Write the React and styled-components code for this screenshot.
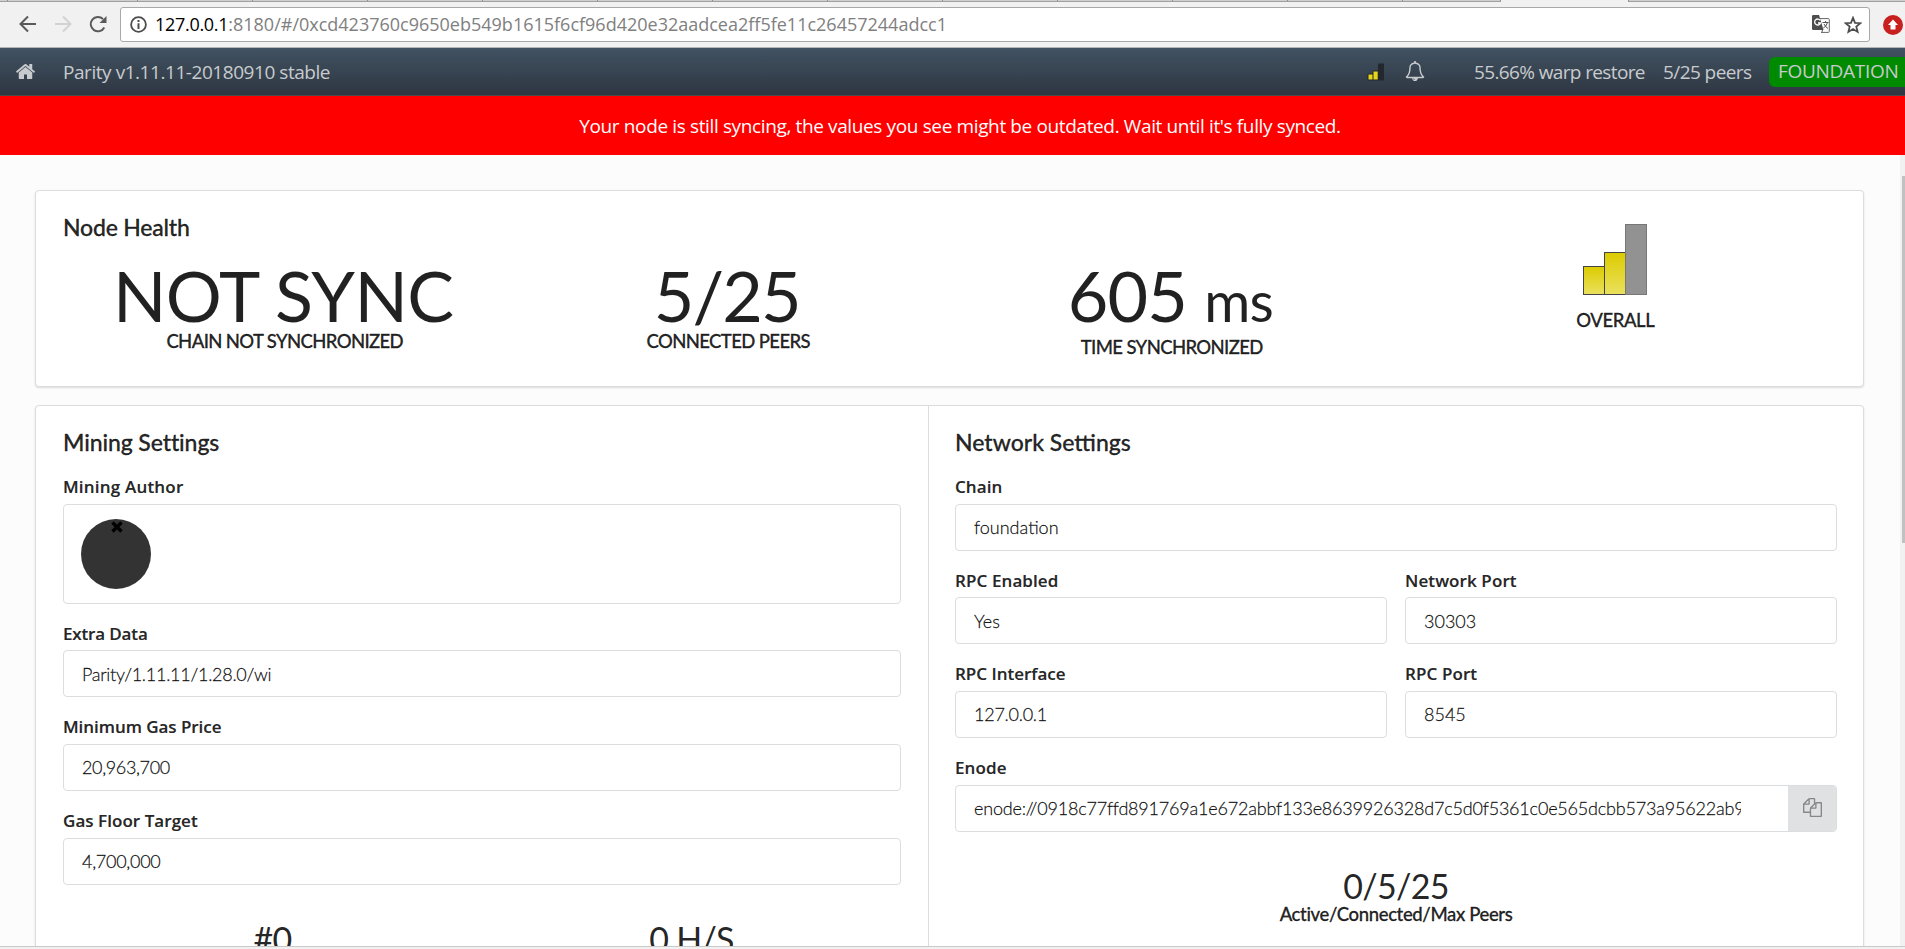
import React from 'react';
import styled, { createGlobalStyle } from 'styled-components';

const GlobalStyle = createGlobalStyle`
  * { box-sizing: border-box; }
  html, body { margin: 0; height: 949px; overflow: hidden; background: #fcfcfc; }
  body { font-family: Lato, "Liberation Sans", sans-serif; color: rgba(0, 0, 0, 0.87); }
`;

const ui = '"Open Sans", "Noto Sans", sans-serif';

const Window = styled.div`
  width: 1905px;
  height: 949px;
  display: flex;
  flex-direction: column;
  overflow: hidden;
`;

const TabStrip = styled.div`
  height: 2px;
  flex: none;
  display: flex;
  background: #cfcfcf;
  border-bottom: 1px solid #a0a0a0;
`;
const Tab = styled.div`
  width: ${(p) => p.$w}px;
  flex: none;
  height: ${(p) => (p.$active ? 2 : 1)}px;
  background: ${(p) => (p.$active ? '#f1f1f1' : '#cfcfcf')};
  border-right: 1px solid #8f8f8f;
`;

const Toolbar = styled.div`
  height: 46px;
  flex: none;
  display: flex;
  align-items: flex-start;
  background: #f1f1f1;
  border-bottom: 1px solid #b4b6b5;
  padding: 5px 0 0 18px;
`;
const NavIcon = styled.svg`
  width: 20px;
  height: 20px;
  margin: 7px 15px 0 0;
  flex: none;
  fill: none;
  stroke: ${(p) => (p.$dim ? '#d2d2d2' : '#5a5a5a')};
  stroke-width: 2;
`;
const AddressBar = styled.div`
  width: 1750px;
  height: 35px;
  margin-left: -3px;
  display: flex;
  align-items: center;
  background: #fff;
  border: 1px solid #a8a8a8;
  border-radius: 3px;
  padding: 0 7px 0 9px;
  svg { flex: none; }
`;
const Url = styled.div`
  flex: 1;
  margin-left: 8px;
  font: 18px/32px ${ui};
  height: 33px;
  letter-spacing: 0;
  color: #808080;
  white-space: nowrap;
  b { font-weight: 400; color: #000; letter-spacing: -0.3px; }
`;
const StarIcon = styled.svg`
  margin-left: 14px;
`;
const UpdateIcon = styled.svg`
  margin: 8px 0 0 13px;
  flex: none;
`;

const Header = styled.header`
  height: 48px;
  flex: none;
  display: flex;
  align-items: center;
  padding-left: 15px;
  background: linear-gradient(#415262, #2e3641);
  border-bottom: 1px solid #4a4a4a;
  color: #c8cbce;
  font: 19px/46px ${ui};
  white-space: nowrap;
  svg { flex: none; }
`;
const BellIcon = styled.svg`
  margin: 0 49px 2px 20px;
`;
const HeaderText = styled.span`
  margin-left: ${(p) => p.$gap}px;
  width: ${(p) => p.$w}px;
  flex: none;
  letter-spacing: ${(p) => p.$ls || 0}px;
`;
const Spacer = styled.div`flex: 1;`;
const ChainBadge = styled.span`
  width: 142px;
  height: 30px;
  margin: 0 -6px 0 18px;
  flex: none;
  padding-left: 9px;
  background: #008a00;
  border-radius: 6px;
  line-height: 28px;
  letter-spacing: -0.3px;
`;

const Banner = styled.div`
  height: 59px;
  flex: none;
  padding-left: 15px;
  background: #f00;
  color: #fff;
  text-align: center;
  font: 19px/60px ${ui};
  letter-spacing: -0.37px;
`;

const Viewport = styled.div`
  flex: 1;
  min-height: 0;
  display: flex;
  overflow: hidden;
  border-bottom: 1px solid #c9c9c9;
`;
const Page = styled.main`
  flex: 1;
  padding: 35px 36px 0 35px;
`;
const Scrollbar = styled.div`
  width: 6px;
  flex: none;
  background: #f1f1f1;
  padding: 21px 0 0 2px;
`;
const Thumb = styled.div`
  height: 367px;
  background: #c1c1c1;
`;
const StatusEdge = styled.div`
  height: 2px;
  flex: none;
  background: #f1f1f1;
`;

const Card = styled.section`
  border: 1px solid #dcddde;
  border-radius: 4px;
  background: #fff;
  box-shadow: 0 1px 2px rgba(34, 36, 38, 0.15);
`;
const HealthCard = styled(Card)`
  height: 197px;
  padding: 22px 26px 0 27px;
  margin-bottom: 18px;
`;
const SettingsCard = styled(Card)`
  height: 900px;
  display: flex;
`;
const Column = styled.div`
  width: ${(p) => p.$w}px;
  flex: none;
  padding: 22px ${(p) => p.$right}px 0 ${(p) => p.$left}px;
  border-right: ${(p) => (p.$divider ? '1px solid #dcddde' : 'none')};
`;
const Title = styled.h2`
  margin: 0;
  font-size: 23px;
  line-height: 28px;
  font-weight: 500;
  letter-spacing: ${(p) => p.$ls ?? -0.1}px;
  -webkit-text-stroke: 0.3px;
  white-space: nowrap;
`;

const Metrics = styled.div`
  display: grid;
  grid-template-columns: repeat(4, 1fr);
`;
const Metric = styled.div`
  display: flex;
  flex-direction: column;
  align-items: center;
  text-align: center;
  white-space: nowrap;
`;
const BigValue = styled.div`
  margin: 19px 3px 0 0;
  height: ${(p) => p.$h || 69}px;
  font-size: 70px;
  line-height: 71px;
  letter-spacing: ${(p) => p.$ls}px;
  small { font-size: 56px; }
`;
const Caption = styled.div`
  font-size: 18.500px;
  line-height: 24px;
  font-weight: 500;
  -webkit-text-stroke: 0.3px;
  letter-spacing: ${(p) => p.$ls || 0}px;
`;
const OverallBars = styled.svg`
  margin: -17px 0 12px;
`;

const Field = styled.div`
  margin-top: ${(p) => (p.$first ? 18.1 : 17.2)}px;
  flex: 1;
`;
const FieldRow = styled.div`
  display: flex;
  gap: 18px;
`;
const Label = styled.div`
  height: 29.5px;
  font: 600 17px/25px ${ui};
  letter-spacing: ${(p) => p.$ls ?? 0.1}px;
  -webkit-text-stroke: 0.2px;
  white-space: nowrap;
`;
const Box = styled.div`
  height: ${(p) => p.$h || 47}px;
  display: flex;
  align-items: center;
  border: 1px solid #dcddde;
  border-radius: 4px;
  padding: 0 0 0.5px 18px;
  font-size: 18px;
  font-weight: 300;
  line-height: 24px;
  overflow: hidden;
`;
const BoxText = styled.span`
  width: ${(p) => (p.$w ? p.$w + 'px' : 'auto')};
  overflow: hidden;
  white-space: nowrap;
  letter-spacing: ${(p) => p.$ls || 0}px;
  -webkit-text-stroke: 0.3px;
`;
const CopyButton = styled.div`
  width: 49px;
  height: 48px;
  margin: -1px -1px -1px auto;
  display: flex;
  align-items: center;
  justify-content: center;
  background: #e0e1e2;
`;
const Avatar = styled.div`
  width: 70px;
  height: 70px;
  margin: 2px 0 0 -1px;
  border-radius: 50%;
  background: #333;
  display: flex;
  justify-content: center;
  padding: 2px 0 0 1px;
`;

const Stats = styled.div`
  display: flex;
  margin-top: ${(p) => p.$top}px;
`;
const Stat = styled.div`
  flex: 1;
  text-align: center;
  white-space: nowrap;
`;
const StatValue = styled.div`
  font-size: 34px;
  line-height: 34px;
  height: 33px;
  letter-spacing: -0.7px;
`;

const TextField = ({ label, value, first, ls, labelLs }) => (
  <Field $first={first}>
    <Label $ls={labelLs}>{label}</Label>
    <Box><BoxText $ls={ls}>{value}</BoxText></Box>
  </Field>
);

const tabs = [8, 130, 115, 115, 115, 115, 115, 115, 115, 115, 115, 115, 115, 98];

export default function App() {
  return (
    <Window>
      <GlobalStyle />
      <TabStrip>
        {tabs.map((w, i) => <Tab key={i} $w={w} />)}
        <Tab $w={128} $active />
      </TabStrip>
      <Toolbar>
        <NavIcon viewBox="0 0 20 20"><path d="M18 10H3M10 2.5L2.5 10l7.5 7.5" /></NavIcon>
        <NavIcon viewBox="0 0 20 20" $dim><path d="M2 10h15M10 2.5l7.500 7.5-7.5 7.500" /></NavIcon>
        <NavIcon viewBox="0 0 20 20">
          <path d="M16.300 13.500A7.200 7.200 0 1 1 15 5" />
          <path d="M18.500 2v7h-7z" fill="#5a5a5a" stroke="none" />
        </NavIcon>
        <AddressBar>
          <svg width="17" height="17" viewBox="0 0 17 17">
            <circle cx="8.500" cy="8.500" r="7.400" fill="none" stroke="#4d4d4d" strokeWidth="1.800" />
            <path d="M7.500 4h2v2h-2zM7.500 7.300h2V13h-2z" fill="#4d4d4d" />
          </svg>
          <Url><b>127.0.0.1</b>:8180/#/0xcd423760c9650eb549b1615f6cf96d420e32aadcea2ff5fe11c26457244adcc1</Url>
          <svg width="18" height="19" viewBox="0 0 18 19">
            <path d="M8 3.600h8.300q1 0 1 1v11.800q0 1-1 1H10" fill="none" stroke="#666" />
            <path d="M1.200 0H7l4.500 15H1.200Q0 15 0 13.800V1.200Q0 0 1.200 0z" fill="#4d4d4d" />
            <path d="M8.200 5.400A3 3 0 1 0 8.500 8H6" fill="none" stroke="#fff" strokeWidth="1.300" />
            <path d="M10.500 7.500h6M13.500 6v1.500M15.300 8q-1 3.500-4 5M12 9q1.500 3 4 4.500M10.500 15l-1 3" fill="none" stroke="#555" />
          </svg>
          <StarIcon width="18" height="18" viewBox="0 0 18 18">
            <path d="M9 1.800l2 5 5.400.4-4.100 3.400 1.300 5.300L9 13l-4.600 2.900 1.300-5.300-4.100-3.400 5.400-.4z" fill="none" stroke="#4d4d4d" strokeWidth="1.800" />
          </StarIcon>
        </AddressBar>
        <UpdateIcon width="20" height="20" viewBox="0 0 20 20">
          <circle cx="10" cy="10" r="10" fill="#c8201e" />
          <path d="M10 4.500l5 5.500h-2.500v4.500h-5V10H5z" fill="#fff" />
        </UpdateIcon>
      </Toolbar>

      <Header>
        <svg width="21" height="21" viewBox="0 0 1792 1792" fill="#c8cbce">
          <path d="M1472 992v480q0 26-19 45t-45 19h-384v-384h-256v384h-384q-26 0-45-19t-19-45v-480q0-1 .5-3t.5-3l575-474 575 474q1 2 1 6zm223-69l-62 74q-8 9-21 11h-3q-13 0-21-7l-692-577-692 577q-12 8-24 7-13-2-21-11l-62-74q-8-10-7-23.500t11-21.500l719-599q32-26 76-26t76 26l244 204v-195q0-14 9-23t23-9h192q14 0 23 9t9 23v408l219 182q10 8 11 21.500t-7 23.500z" />
        </svg>
        <HeaderText $gap={27} $ls={-0.45}>Parity v1.11.11-20180910 stable</HeaderText>
        <Spacer />
        <svg width="18" height="18" viewBox="0 0 18 18">
          <path d="M0.500 10.500h5v-3h5.500v-7h6v17H0.500z" fill="#23282e" />
          <path d="M1.500 11.500h4v5h-4zM6.500 8.500h4.200v8H6.500z" fill="#e6d51a" />
        </svg>
        <BellIcon width="20" height="20" viewBox="0 0 1792 1792" fill="#c8cbce">
          <path d="M912 1696q0-16-16-16-59 0-101.500-42.500t-42.500-101.500q0-16-16-16t-16 16q0 73 51.500 124.500t124.500 51.500q16 0 16-16zm-666-288h1300q-266-300-266-832 0-51-24-105t-69-103-121.500-80.500-169.500-31.500-169.500 31.500-121.500 80.500-69 103-24 105q0 532-266 832zm1482 0q0 52-38 90t-90 38h-448q0 106-75 181t-181 75-181-75-75-181h-448q-52 0-90-38t-38-90q50-42 91-88t85-119.500 74.500-158.500 50-206 19.500-260q0-152 117-282.500t307-158.500q-8-19-8-39 0-40 28-68t68-28 68 28 28 68q0 20-8 39 190 28 307 158.500t117 282.500q0 139 19.500 260t50 206 74.500 158.500 85 119.500 91 88z" />
        </BellIcon>
        <HeaderText $gap={0} $w={171} $ls={-0.63}>55.66% warp restore</HeaderText>
        <HeaderText $gap={18} $w={88} $ls={-0.58}>5/25 peers</HeaderText>
        <ChainBadge>FOUNDATION</ChainBadge>
      </Header>

      <Banner>Your node is still syncing, the values you see might be outdated. Wait until it's fully synced.</Banner>

      <Viewport>
        <Page>
          <HealthCard>
            <Title $ls={-0.2}>Node Health</Title>
            <Metrics>
              <Metric><BigValue $ls={-0.6}>NOT SYNC</BigValue><Caption $ls={-0.63}>CHAIN NOT SYNCHRONIZED</Caption></Metric>
              <Metric><BigValue $ls={-1.8}>5/25</BigValue><Caption $ls={-0.6}>CONNECTED PEERS</Caption></Metric>
              <Metric><BigValue $h={75} $ls={-0.8}>605 <small>ms</small></BigValue><Caption $ls={-0.62}>TIME SYNCHRONIZED</Caption></Metric>
              <Metric>
                <OverallBars width="66" height="72" viewBox="0 0 66 72">
                  <defs>
                    <linearGradient id="gold" x1="0" y1="0" x2="0" y2="1">
                      <stop offset="0" stopColor="#dccb00" />
                      <stop offset="1" stopColor="#eae15e" />
                    </linearGradient>
                  </defs>
                  <rect x="1.500" y="42.500" width="21" height="28" fill="url(#gold)" stroke="#444" />
                  <rect x="22.500" y="28.500" width="21" height="42" fill="url(#gold)" stroke="#444" />
                  <rect x="43.500" y="0.500" width="21" height="70" fill="#929292" stroke="#777" />
                </OverallBars>
                <Caption $ls={-0.43}>OVERALL</Caption>
              </Metric>
            </Metrics>
          </HealthCard>

          <SettingsCard>
            <Column $w={893} $left={27} $right={27} $divider>
              <Title>Mining Settings</Title>
              <Field $first>
                <Label $ls={0.2}>Mining Author</Label>
                <Box $h={100}>
                  <Avatar>
                    <svg width="12" height="12" viewBox="0 0 12 12">
                      <path d="M1.500 1.500l9 9M10.500 1.500l-9 9" stroke="#000" strokeWidth="3.400" />
                    </svg>
                  </Avatar>
                </Box>
              </Field>
              <TextField label="Extra Data" labelLs={-0.15} value="Parity/1.11.11/1.28.0/wi" ls={-0.27} />
              <TextField label="Minimum Gas Price" labelLs={-0.05} value="20,963,700" ls={-0.36} />
              <TextField label="Gas Floor Target" labelLs={0.05} value="4,700,000" ls={-0.27} />
              <Stats $top={37}>
                <Stat><StatValue>#0</StatValue></Stat>
                <Stat><StatValue>0 H/S</StatValue></Stat>
              </Stats>
            </Column>
            <Column $w={934} $left={26} $right={26}>
              <Title $ls={0}>Network Settings</Title>
              <TextField first label="Chain" value="foundation" />
              <FieldRow>
                <TextField label="RPC Enabled" labelLs={0.1} value="Yes" />
                <TextField label="Network Port" value="30303" />
              </FieldRow>
              <FieldRow>
                <TextField label="RPC Interface" labelLs={0} value="127.0.0.1" ls={-0.25} />
                <TextField label="RPC Port" value="8545" />
              </FieldRow>
              <Field>
                <Label>Enode</Label>
                <Box>
                  <BoxText $w={767} $ls={-0.2}>enode://0918c77ffd891769a1e672abbf133e8639926328d7c5d0f5361c0e565dcbb573a95622ab9</BoxText>
                  <CopyButton>
                    <svg width="19" height="19" viewBox="0 0 1792 1792" fill="#85878a">
                      <path d="M1696 384q40 0 68 28t28 68v1216q0 40-28 68t-68 28h-960q-40 0-68-28t-28-68v-288h-544q-40 0-68-28t-28-68v-672q0-40 20-88t48-76l408-408q28-28 76-48t88-20h416q40 0 68 28t28 68v328q68-40 128-40h416zm-544 213l-299 299h299v-299zm-640-384l-299 299h299v-299zm196 647l316-316v-416h-384v416q0 40-28 68t-68 28h-416v640h512v-256q0-40 20-88t48-76zm956 804v-1152h-384v416q0 40-28 68t-68 28h-416v640h896z" />
                    </svg>
                  </CopyButton>
                </Box>
              </Field>
              <Stats $top={37}>
                <Stat><StatValue>0/5/25</StatValue><Caption $ls={-0.37}>Active/Connected/Max Peers</Caption></Stat>
              </Stats>
            </Column>
          </SettingsCard>
        </Page>
        <Scrollbar><Thumb /></Scrollbar>
      </Viewport>
      <StatusEdge />
    </Window>
  );
}
